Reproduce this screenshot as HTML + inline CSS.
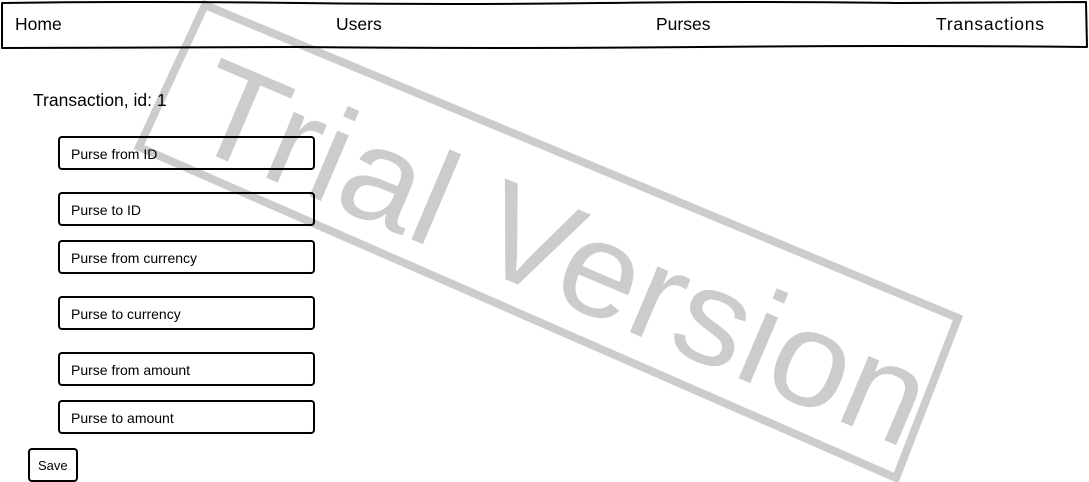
<!DOCTYPE html>
<html><head><meta charset="utf-8"><style>
html,body{margin:0;padding:0;background:#fff;width:1089px;height:482px;overflow:hidden}
svg{display:block}
text{font-family:"Liberation Sans",sans-serif;fill:#000}
</style></head><body>
<svg width="1089" height="482" viewBox="0 0 1089 482" xmlns="http://www.w3.org/2000/svg">
<polygon points="205,5 958,318 896,478 139,147" fill="none" stroke="#cccccc" stroke-width="8"/>
<text transform="translate(182,142) rotate(23)" x="0" y="0" font-size="135" textLength="785" lengthAdjust="spacingAndGlyphs" style="fill:#cccccc">Trial Version</text>
<g fill="none" stroke="#000" stroke-width="2" stroke-linejoin="round">
<path d="M2,3 Q150,1 300,3 T600,3 T900,3 L1086,2 L1087,47 Q900,45 700,47 T300,47 L2,48 Z"/>
<rect x="59" y="137" width="255" height="32" rx="3"/>
<rect x="59" y="193" width="255" height="32" rx="3"/>
<rect x="59" y="241" width="255" height="32" rx="3"/>
<rect x="59" y="297" width="255" height="32" rx="3"/>
<rect x="59" y="353" width="255" height="32" rx="3"/>
<rect x="59" y="401" width="255" height="32" rx="3"/>
<rect x="29" y="449" width="48" height="32" rx="3"/>
</g>
<g font-size="17.5">
<text x="15" y="30">Home</text>
<text x="336" y="30">Users</text>
<text x="656" y="30">Purses</text>
<text x="936" y="30" textLength="108">Transactions</text>
<text x="33" y="106">Transaction, id: 1</text>
</g>
<g font-size="14">
<text x="71" y="159">Purse from ID</text>
<text x="71" y="215">Purse to ID</text>
<text x="71" y="263">Purse from currency</text>
<text x="71" y="319">Purse to currency</text>
<text x="71" y="375">Purse from amount</text>
<text x="71" y="423">Purse to amount</text>
<text x="38" y="470" font-size="13">Save</text>
</g>
</svg>
</body></html>
